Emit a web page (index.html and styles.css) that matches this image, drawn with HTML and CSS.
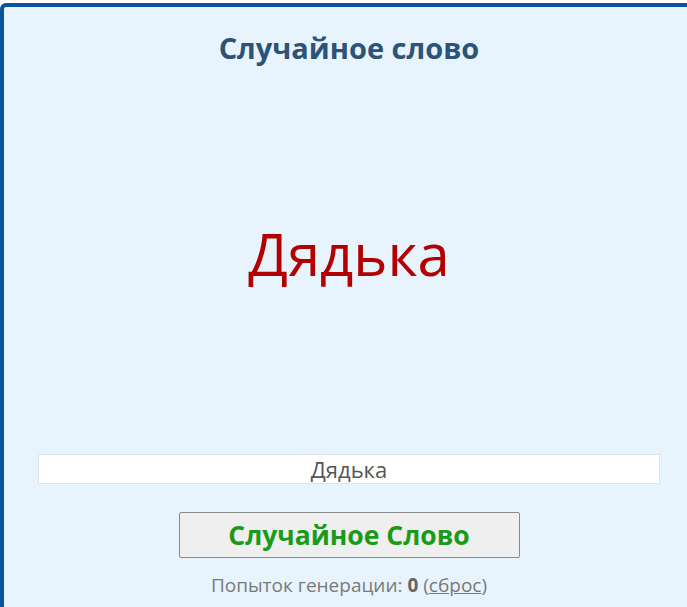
FILE: index.html
```html
<!DOCTYPE html>
<html lang="ru">
<head>
<meta charset="utf-8">
<title>Случайное слово</title>
<link rel="stylesheet" href="styles.css">
</head>
<body>
<div class="panel">
  <h1 class="title">Случайное слово</h1>
  <div class="stage">
    <div class="word">Дядька</div>
  </div>
  <div class="field">Дядька</div>
  <div class="actions">
    <button class="gen-btn" type="button">Случайное Слово</button>
  </div>
  <p class="counter">Попыток генерации: <b>0</b> (<a class="reset" href="#">сброс</a>)</p>
</div>
</body>
</html>
```
FILE: styles.css
```css
html, body {
  margin: 0;
  padding: 0;
  background: #ffffff;
}
body {
  padding-top: 3px;
  font-family: "Open Sans", "Noto Sans", sans-serif;
  overflow: hidden;
}
.panel {
  box-sizing: border-box;
  width: 700px;
  height: 620px;
  background: #e8f4fd;
  border: 4px solid #0b529c;
  border-radius: 6px;
  padding: 0 36px 0 34px;
}
.title {
  margin: 0;
  padding-top: 24px;
  text-align: center;
  font-size: 29px;
  line-height: 34px;
  font-weight: 700;
  color: #2c5378;
}
.stage {
  height: 389px;
  display: flex;
  align-items: center;
  justify-content: center;
  box-sizing: border-box;
}
.word {
  font-size: 58px;
  line-height: 70px;
  color: #b30000;
  margin-top: -12px;
}
.field {
  height: 30px;
  box-sizing: border-box;
  background: #ffffff;
  border: 1px solid #dde3e8;
  text-align: center;
  font-size: 22px;
  line-height: 28px;
  color: #555555;
}
.actions {
  display: flex;
  justify-content: center;
  padding-top: 28px;
}
.gen-btn {
  width: 341px;
  height: 46px;
  background: #efefef;
  border: 1px solid #8a8a8a;
  border-radius: 2px;
  font-family: "Open Sans", "Noto Sans", sans-serif;
  font-size: 26.5px;
  font-weight: 700;
  color: #1a9a1a;
  padding: 0;
}
.counter {
  margin: 14px 0 0;
  text-align: center;
  font-size: 19px;
  line-height: 26px;
  color: #7a7a7a;
}
.counter b {
  color: #666666;
}
.reset {
  color: #777777;
  text-decoration: underline;
}
```
